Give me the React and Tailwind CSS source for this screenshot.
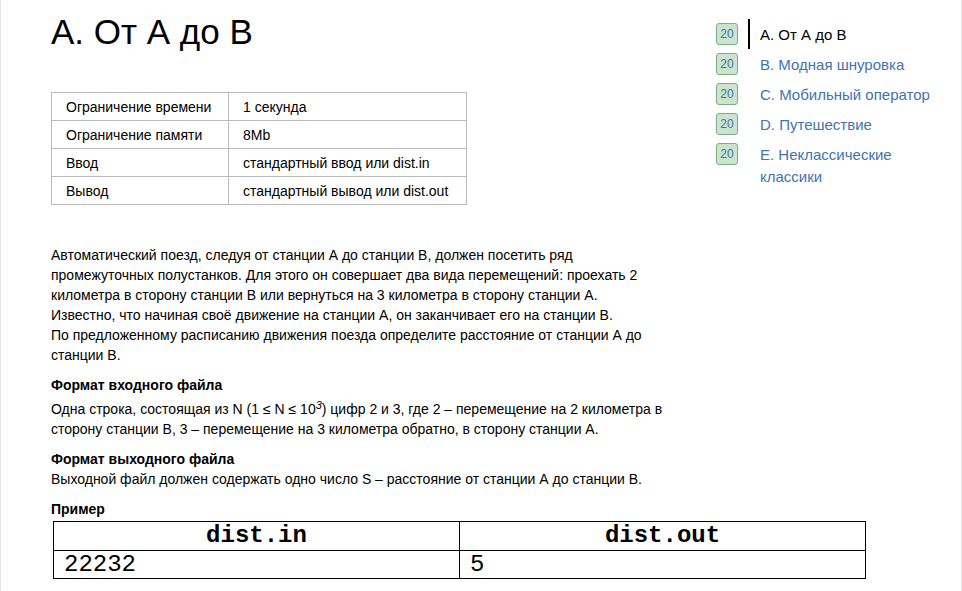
const limits = [
  ["Ограничение времени", "1 секунда"],
  ["Ограничение памяти", "8Mb"],
  ["Ввод", "стандартный ввод или dist.in"],
  ["Вывод", "стандартный вывод или dist.out"],
];

const problems = [
  "A. От А до В",
  "B. Модная шнуровка",
  "C. Мобильный оператор",
  "D. Путешествие",
  "E. Неклассические классики",
];

function LimitsTable() {
  return (
    <table className="mt-10 w-[416px] table-fixed border-collapse text-sm leading-5">
      <tbody>
        {limits.map(([name, value]) => (
          <tr key={name} className="h-7">
            <th scope="row" className="w-[177px] border border-[#bbb] px-3.5 text-left font-normal">{name}</th>
            <td className="border border-[#bbb] px-3.5">{value}</td>
          </tr>
        ))}
      </tbody>
    </table>
  );
}

function Statement() {
  return (
    <div className="mt-10 text-sm leading-5">
      <p>
        Автоматический поезд, следуя от станции А до станции В, должен посетить ряд промежуточных полустанков. Для
        этого он совершает два вида перемещений: проехать 2 километра в сторону станции В или вернуться на 3 километра
        в сторону станции А.
        <br />
        Известно, что начиная своё движение на станции А, он заканчивает его на станции В.
        <br />
        По предложенному расписанию движения поезда определите расстояние от станции А до станции В.
      </p>
      <h2 className="mt-2.5 font-bold">Формат входного файла</h2>
      <p className="pt-1">
        Одна строка, состоящая из N (1 ≤ N ≤ 10<sup className="text-[11px] italic">3</sup>) цифр 2 и 3, где 2 –
        перемещение на 2 километра в сторону станции В, 3 – перемещение на 3 километра обратно, в сторону станции А.
      </p>
      <h2 className="mt-2.5 font-bold">Формат выходного файла</h2>
      <p>Выходной файл должен содержать одно число S – расстояние от станции А до станции В.</p>
      <h2 className="mt-2.5 font-bold">Пример</h2>
    </div>
  );
}

function ExampleTable() {
  return (
    <table className="ml-0.5 mt-0.5 w-full max-w-[813px] table-fixed border-collapse font-['Liberation_Mono','Courier_New',monospace] text-2xl">
      <thead>
        <tr>
          <th className="border border-black leading-7 font-bold">dist.in</th>
          <th className="border border-black leading-7 font-bold">dist.out</th>
        </tr>
      </thead>
      <tbody>
        <tr>
          <td className="border border-black px-2.5 leading-[27px]">22232</td>
          <td className="border border-black px-2.5 leading-[27px]">5</td>
        </tr>
      </tbody>
    </table>
  );
}

function ProblemList() {
  return (
    <nav className="w-[225px] shrink-0 pt-[19px]">
      <ul className="text-[15px] leading-[22px]">
        {problems.map((name, i) => (
          <li key={name} className="flex items-start gap-2.5">
            <span className="mt-1 flex size-[22px] shrink-0 items-center justify-center rounded-[3px] border border-[#7fae84] bg-[#cbe5cd] text-xs text-[#4272b4]">
              20
            </span>
            {i === 0 ? (
              <span aria-current="page" className="border-l-2 border-black pt-[5px] pb-[3px] pl-2.5">{name}</span>
            ) : (
              <a href="#" className="border-l-2 border-transparent pt-[5px] pb-[3px] pl-2.5 text-[#4272b4]">{name}</a>
            )}
          </li>
        ))}
      </ul>
    </nav>
  );
}

export default function App() {
  return (
    <div className="min-h-screen border-x border-[#e5e5e5] bg-white pl-[50px] pr-5 font-['Liberation_Sans',Arial,sans-serif] text-black">
      <div className="flex justify-between gap-5">
        <main className="max-w-[625px] flex-1">
          <h1 className="pt-3 text-[35px] leading-10">A. От А до В</h1>
          <LimitsTable />
          <Statement />
        </main>
        <ProblemList />
      </div>
      <ExampleTable />
    </div>
  );
}
